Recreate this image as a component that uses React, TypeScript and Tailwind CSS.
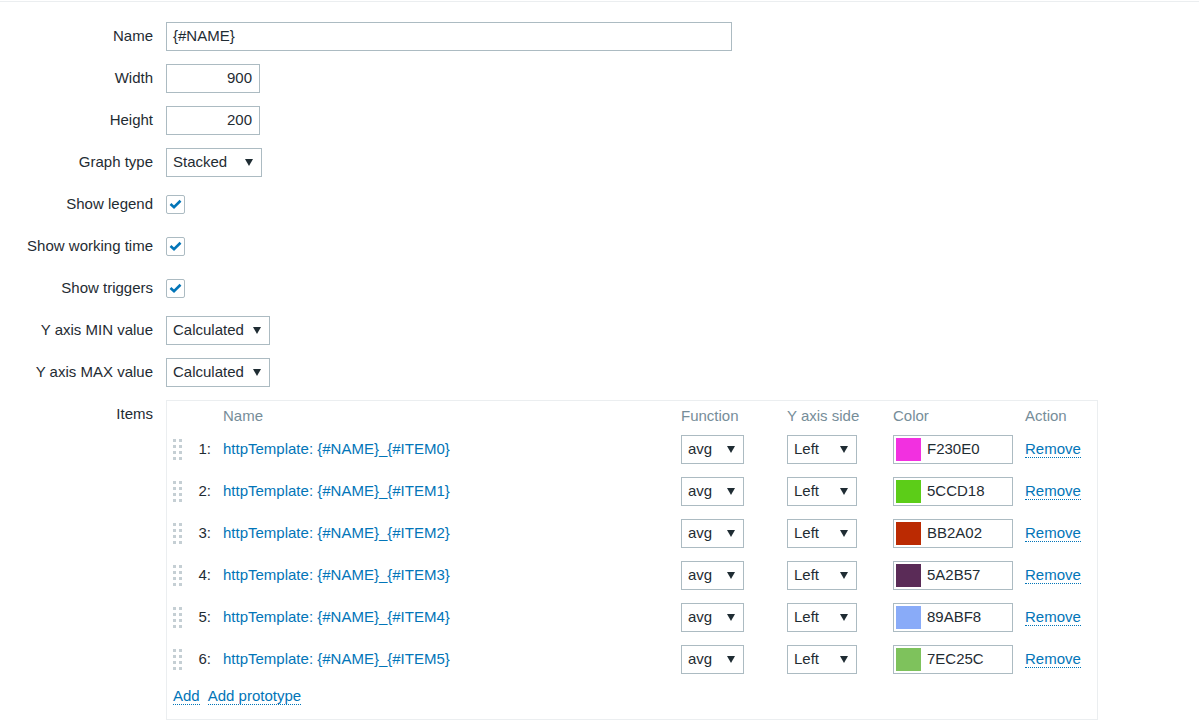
import React from "react";

const items = [
  { n: 1, name: "httpTemplate: {#NAME}_{#ITEM0}", color: "F230E0", hex: "#f230e0" },
  { n: 2, name: "httpTemplate: {#NAME}_{#ITEM1}", color: "5CCD18", hex: "#5ccd18" },
  { n: 3, name: "httpTemplate: {#NAME}_{#ITEM2}", color: "BB2A02", hex: "#bb2a02" },
  { n: 4, name: "httpTemplate: {#NAME}_{#ITEM3}", color: "5A2B57", hex: "#5a2b57" },
  { n: 5, name: "httpTemplate: {#NAME}_{#ITEM4}", color: "89ABF8", hex: "#89abf8" },
  { n: 6, name: "httpTemplate: {#NAME}_{#ITEM5}", color: "7EC25C", hex: "#7ec25c" },
];

function Arrow() {
  return (
    <svg width="8" height="7" viewBox="0 0 8 7" className="shrink-0">
      <polygon points="0,0 8,0 4,7" fill="#1f2c33" />
    </svg>
  );
}

function Select({ value, width }: { value: string; width: string }) {
  return (
    <div
      className={`${width} h-[29px] border border-[#acbbc2] bg-white flex items-center justify-between pl-[6px] pr-[8px]`}
    >
      <span>{value}</span>
      <Arrow />
    </div>
  );
}

function Checkbox() {
  return (
    <div className="w-[19px] h-[19px] border border-[#acbbc2] rounded-[2px] bg-white flex items-center justify-center">
      <svg width="13" height="10" viewBox="0 0 13 10">
        <path d="M1.5 5 L5 8.2 L11.5 1.8" fill="none" stroke="#0275b8" strokeWidth="2.6" />
      </svg>
    </div>
  );
}

function DragHandle() {
  return (
    <div className="grid grid-cols-2 gap-x-[3px] gap-y-[3px] w-[9px]">
      {Array.from({ length: 8 }).map((_, i) => (
        <div key={i} className="w-[3px] h-[3px] bg-[#c5cfd4]" />
      ))}
    </div>
  );
}

function Label({ children }: { children: React.ReactNode }) {
  return <div className="text-right">{children}</div>;
}

export default function App() {
  return (
    <div
      className="w-[1199px] h-[721px] bg-white text-[15px] text-[#1f2c33] overflow-hidden"
      style={{ fontFamily: '"Liberation Sans", Arial, sans-serif' }}
    >
      <div className="mt-px h-px bg-[#ebeef0]" />
      <div className="pt-[13px] grid grid-cols-[153px_1fr] gap-x-[13px] auto-rows-[42px] items-center">
        <Label>Name</Label>
        <div className="w-[566px] h-[29px] border border-[#acbbc2] flex items-center px-[6px]">
          {"{#NAME}"}
        </div>

        <Label>Width</Label>
        <div className="w-[94px] h-[29px] border border-[#acbbc2] flex items-center justify-end pr-[7px]">
          900
        </div>

        <Label>Height</Label>
        <div className="w-[94px] h-[29px] border border-[#acbbc2] flex items-center justify-end pr-[7px]">
          200
        </div>

        <Label>Graph type</Label>
        <Select value="Stacked" width="w-[96px]" />

        <Label>Show legend</Label>
        <Checkbox />

        <Label>Show working time</Label>
        <Checkbox />

        <Label>Show triggers</Label>
        <Checkbox />

        <Label>Y axis MIN value</Label>
        <Select value="Calculated" width="w-[104px]" />

        <Label>Y axis MAX value</Label>
        <Select value="Calculated" width="w-[104px]" />

        <div className="self-start text-right pt-[12px] leading-[18px]">Items</div>
        <div className="self-start mt-[7px] w-[932px] border border-[#ebeef0] pl-[6px] pb-[9px]">
          <div className="grid grid-cols-[50px_458px_106px_106px_132px_1fr] h-[27px] pt-[4px] items-center text-[#768d99]">
            <div />
            <div>Name</div>
            <div>Function</div>
            <div>Y axis side</div>
            <div>Color</div>
            <div>Action</div>
          </div>
          {items.map((it) => (
            <div
              key={it.n}
              className="grid grid-cols-[50px_458px_106px_106px_132px_1fr] h-[42px] items-center"
            >
              <div className="flex items-center">
                <DragHandle />
                <span className="w-[29px] text-right">{it.n}:</span>
              </div>
              <div className="text-[#0275b8]">{it.name}</div>
              <div>
                <Select value="avg" width="w-[63px]" />
              </div>
              <div>
                <Select value="Left" width="w-[70px]" />
              </div>
              <div>
                <div className="w-[120px] h-[29px] border border-[#acbbc2] flex items-center pl-[2px]">
                  <div className="w-[25px] h-[23px]" style={{ backgroundColor: it.hex }} />
                  <span className="ml-[6px]">{it.color}</span>
                </div>
              </div>
              <div>
                <span className="text-[#0275b8] border-b border-dotted border-[#0275b8] leading-[17px] inline-block">
                  Remove
                </span>
              </div>
            </div>
          ))}
          <div className="h-[30px] pt-[1px] flex items-center gap-[8px]">
            <span className="text-[#0275b8] border-b border-dotted border-[#0275b8] leading-[17px] inline-block">
              Add
            </span>
            <span className="text-[#0275b8] border-b border-dotted border-[#0275b8] leading-[17px] inline-block">
              Add prototype
            </span>
          </div>
        </div>
      </div>
    </div>
  );
}
